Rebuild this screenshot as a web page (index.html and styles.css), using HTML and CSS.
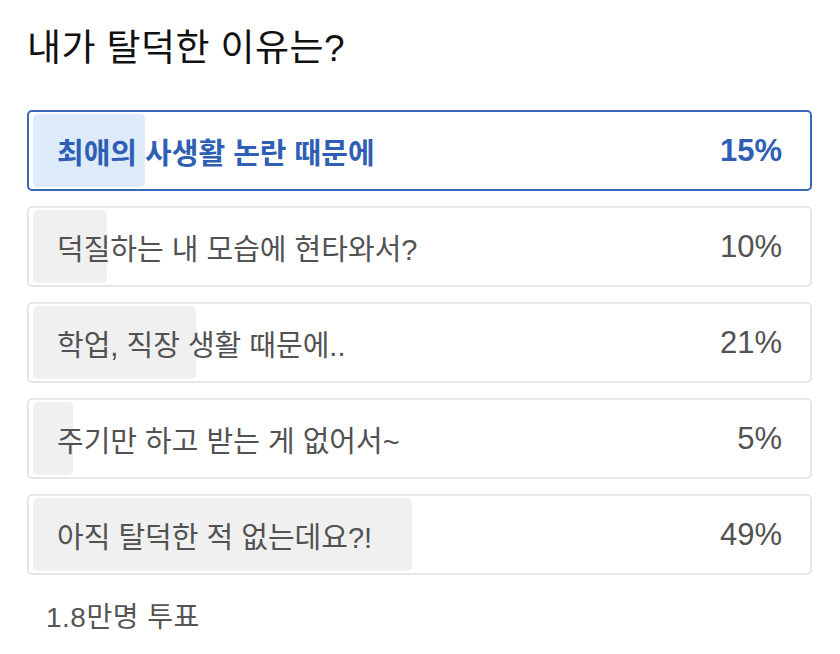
FILE: index.html
```html
<!DOCTYPE html>
<html lang="ko">
<head>
    <meta charset="UTF-8">
    <meta name="viewport" content="width=device-width, initial-scale=1.0">
    <title>투표</title>
    <link rel="stylesheet" href="styles.css">
</head>
<body>
<div class="poll">
    <h1 class="poll-title">내가 탈덕한 이유는?</h1>
    <div class="options">
        <div class="option selected">
            <div class="fill" style="width: 14.4%"></div>
            <span class="label">최애의 사생활 논란 때문에</span>
            <span class="pct">15%</span>
        </div>
        <div class="option">
            <div class="fill" style="width: 9.5%"></div>
            <span class="label">덕질하는 내 모습에 현타와서?</span>
            <span class="pct">10%</span>
        </div>
        <div class="option">
            <div class="fill" style="width: 20.9%"></div>
            <span class="label">학업, 직장 생활 때문에..</span>
            <span class="pct">21%</span>
        </div>
        <div class="option">
            <div class="fill" style="width: 5.1%"></div>
            <span class="label">주기만 하고 받는 게 없어서~</span>
            <span class="pct">5%</span>
        </div>
        <div class="option">
            <div class="fill" style="width: 48.5%"></div>
            <span class="label">아직 탈덕한 적 없는데요?!</span>
            <span class="pct">49%</span>
        </div>
    </div>
    <div class="votes">1.8만명 투표</div>
</div>
</body>
</html>
```

FILE: styles.css
```css
body {
    margin: 0;
    background: #fff;
    font-family: "Liberation Sans", "Noto Sans CJK KR", sans-serif;
}
.poll {
    padding: 0 28px 0 27px;
}
.poll-title {
    margin: 0;
    padding-top: 27px;
    height: 110px;
    box-sizing: border-box;
    font-size: 37px;
    line-height: 44px;
    letter-spacing: 0.4px;
    font-weight: 400;
    color: #111;
}
.options {
    display: flex;
    flex-direction: column;
    gap: 15px;
}
.option {
    position: relative;
    height: 81px;
    box-sizing: border-box;
    border: 2px solid #e6e6e6;
    border-radius: 5px;
    padding: 0 28px;
    display: flex;
    align-items: center;
    justify-content: space-between;
    font-size: 29px;
    color: #525252;
}
.option .fill {
    position: absolute;
    left: 4px;
    top: 2px;
    bottom: 2px;
    border-radius: 5px;
    background: #f0f0f0;
}
.option .label,
.option .pct {
    position: relative;
}
.option .pct {
    font-size: 31px;
}
.option.selected {
    border-color: #3a67b9;
    color: #2f5fb4;
    font-weight: 700;
}
.option.selected .fill {
    background: #ddebfb;
}
.votes {
    margin-top: 20px;
    padding-left: 19px;
    font-size: 28px;
    letter-spacing: 0.5px;
    color: #555;
}
```
